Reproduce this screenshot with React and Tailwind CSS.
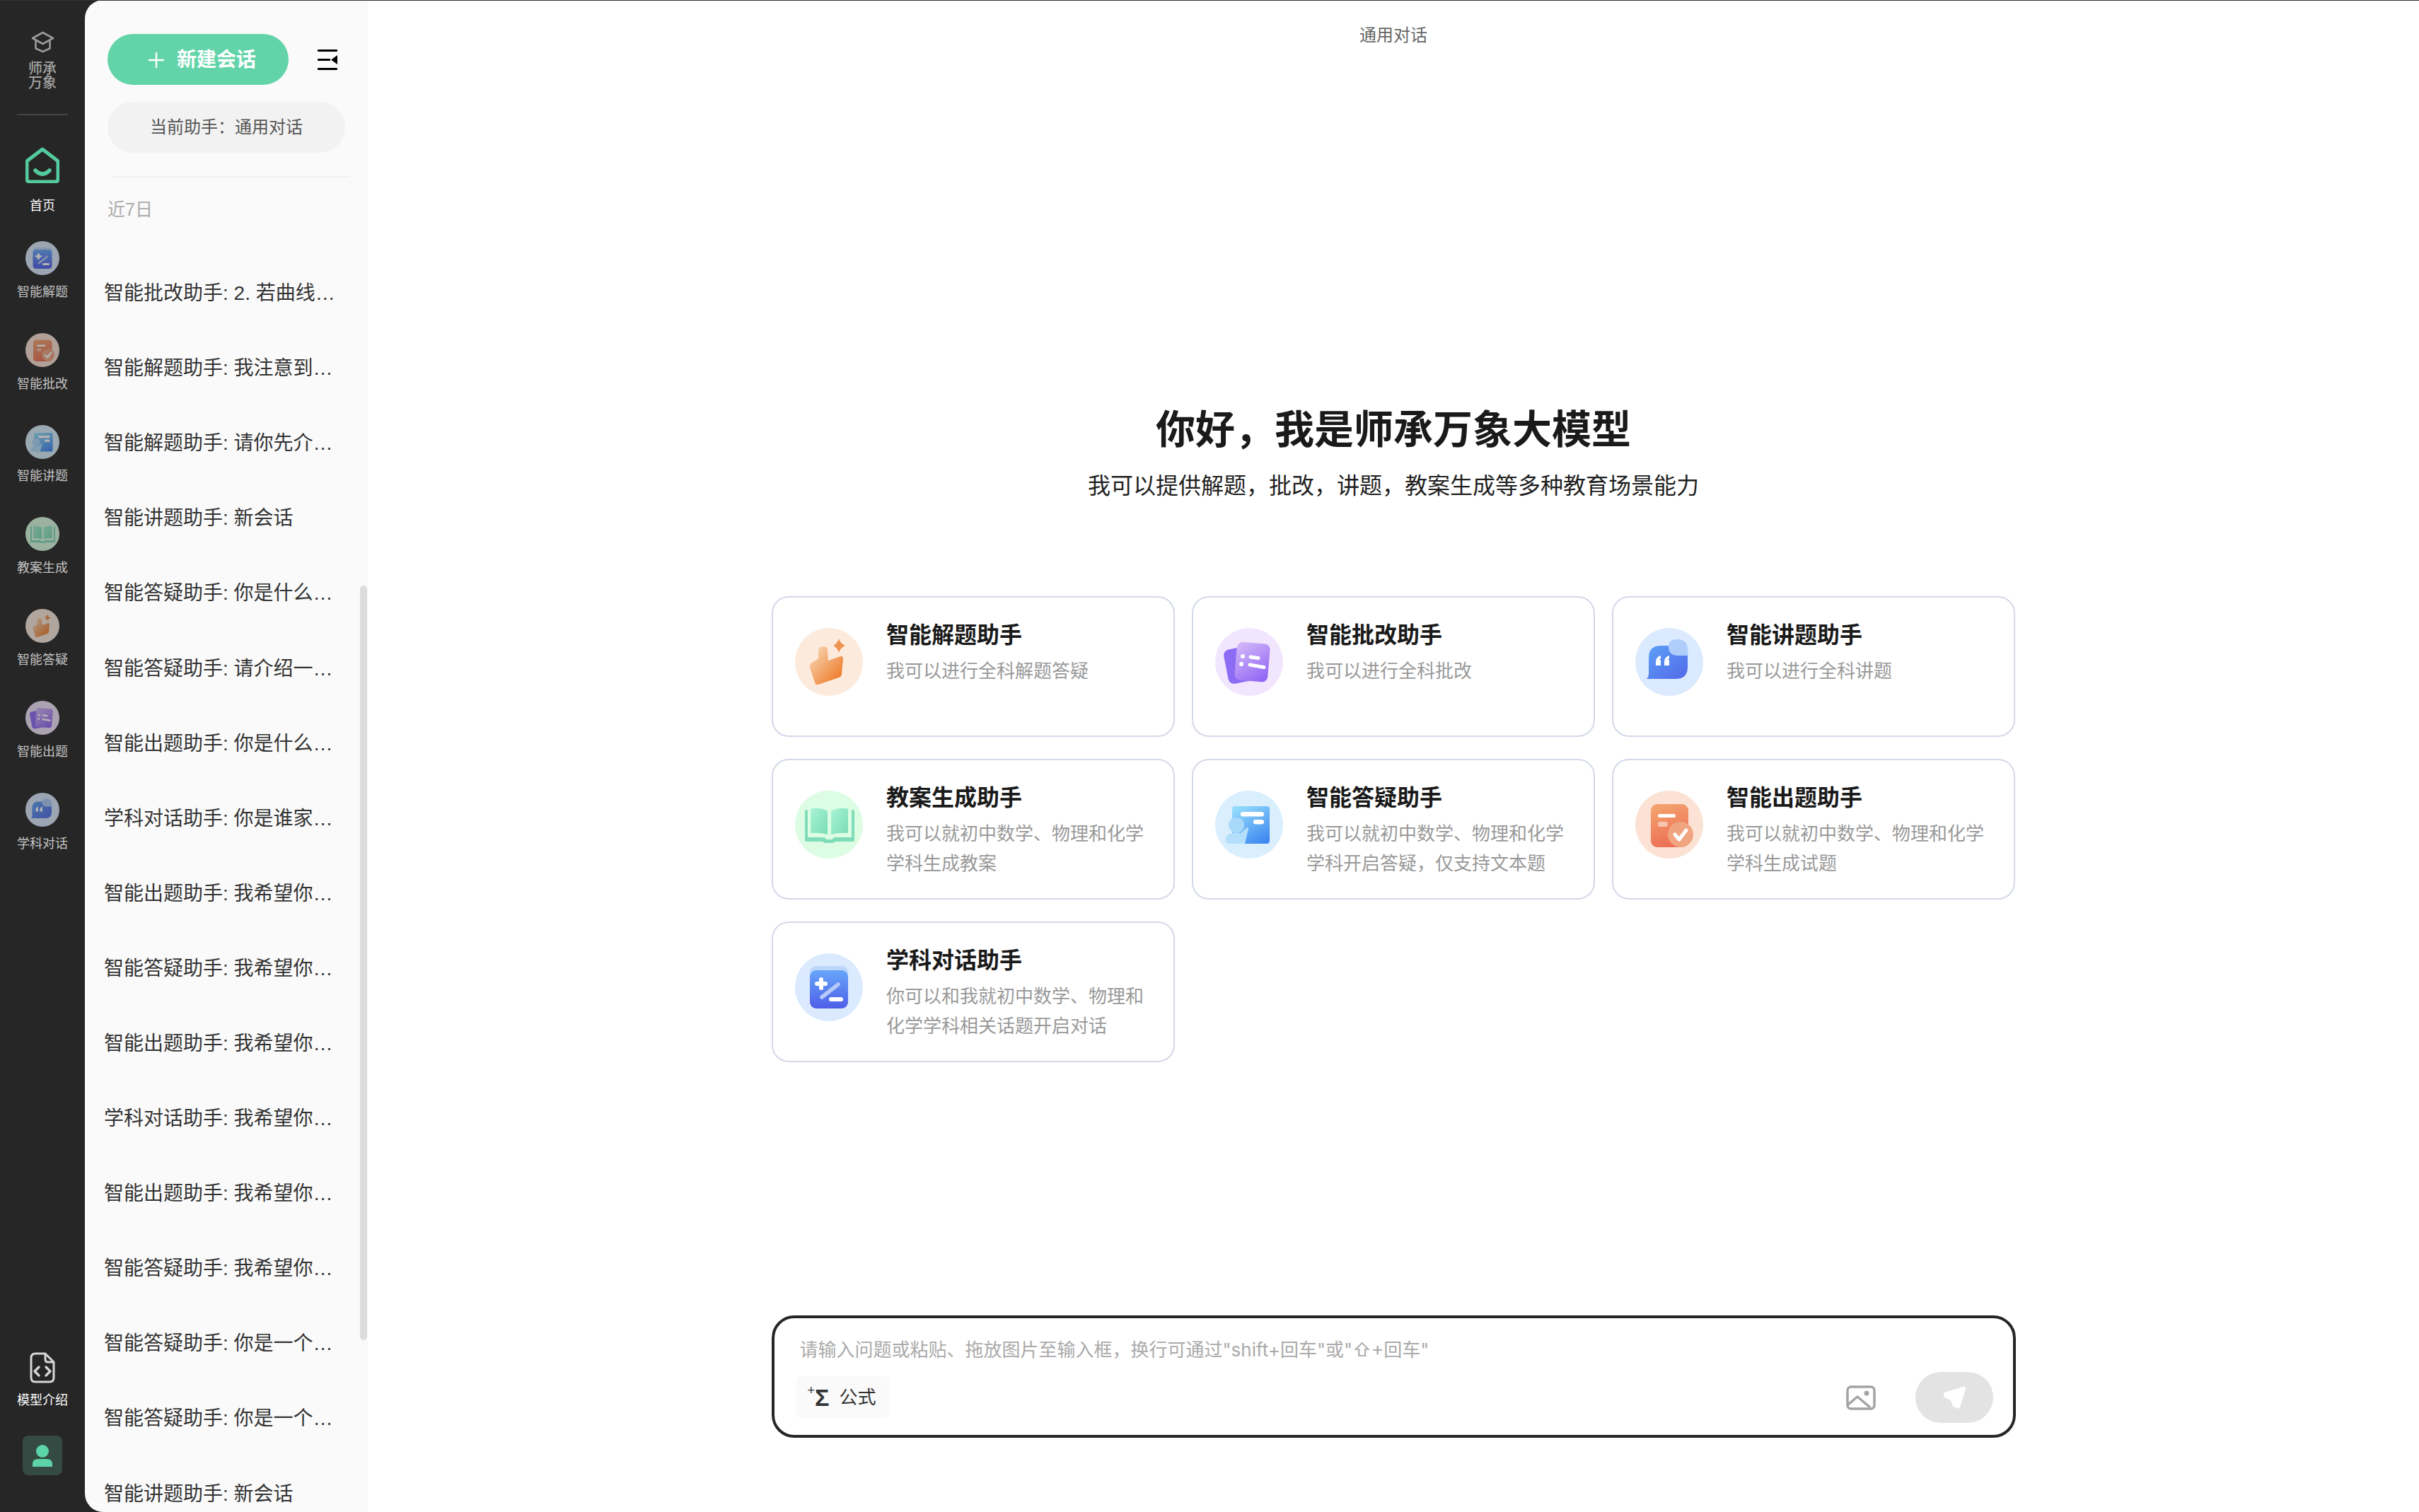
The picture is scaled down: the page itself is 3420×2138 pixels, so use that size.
import { useId } from "react";

const FONT = '"Liberation Sans","Noto Sans CJK SC",sans-serif';

// ikon asisten, semua digambar di kotak 96x96
const ThumbGlyph = ({ id }) => (
  <>
    <defs>
      <linearGradient id={id} x1="0.1" y1="0.1" x2="0.9" y2="0.9">
        <stop offset="0" stopColor="#f7d2ae" />
        <stop offset="1" stopColor="#ee7a28" />
      </linearGradient>
    </defs>
    <path
      d="M33 33q0-7 7-7t6 7l1 13 17-6q4-1 4 4l-2 20q0 5-4 6l-29 10q-4 1-5-3l-7-21q-1-5 3-7l9-6z"
      fill={`url(#${id})`}
    />
    <path d="M62 15q2 7 9 10q-7 3-9 10q-2-7-8-10q6-3 8-10z" fill="#ef9450" />
  </>
);

const CardsGlyph = ({ id }) => (
  <>
    <defs>
      <linearGradient id={id} x1="0.1" y1="0" x2="0.8" y2="1">
        <stop offset="0" stopColor="#d5b9f8" />
        <stop offset="1" stopColor="#9267f5" />
      </linearGradient>
    </defs>
    <rect x="15" y="28" width="38" height="49" rx="8" fill="#8c6bf5" transform="rotate(-11 34 52)" />
    <rect x="29" y="21" width="47" height="54" rx="8" fill={`url(#${id})`} transform="rotate(5 52 48)" />
    <circle cx="39" cy="40" r="3" fill="#fff" />
    <circle cx="37" cy="51" r="3" fill="#fff" />
    <path d="M50 41l11 1.5M49 52l20 3.5" stroke="#fff" strokeWidth="5" strokeLinecap="round" />
  </>
);

const BubbleGlyph = ({ id }) => (
  <>
    <defs>
      <linearGradient id={id} x1="0" y1="0" x2="1" y2="1">
        <stop offset="0" stopColor="#5ea2f8" />
        <stop offset="1" stopColor="#5268e8" />
      </linearGradient>
    </defs>
    <path d="M16 72q3-3 3-8V42q0-17 17-17h21q17 0 17 17v13q0 17-17 17z" fill={`url(#${id})`} />
    <path d="M59 16q15 0 15 14l1 9h6H59q-12-1-12-12t12-11z" fill="#aecdfb" />
    <path
      d="M29 48q0-7 7-9v4q-2 1-2 2h2v8h-7zM41 48q0-7 7-9v4q-2 1-2 2h2v8h-7z"
      fill="#fff"
    />
  </>
);

const BookGlyph = ({ id }) => (
  <>
    <defs>
      <linearGradient id={id} x1="0" y1="0" x2="1" y2="1">
        <stop offset="0" stopColor="#a9f3d6" />
        <stop offset="1" stopColor="#79dcb3" />
      </linearGradient>
    </defs>
    <path
      d="M14 29q0-2 2-2t2 2v37h22q3 0 4 3h9q1-3 4-3h23V29q0-2 2-2t2 2v41q0 2-2 2H57q-2 2-5 2h-8q-3 0-5-2H16q-2 0-2-2z"
      fill="#7fdcb9"
    />
    <path d="M22 27q0-2 3-2 12-1 21 4v33q-10-3-22-2-2 0-2-2z" fill={`url(#${id})`} />
    <path d="M75 27q0-2-3-2-12-1-21 4v33q10-3 22-2 2 0 2-2z" fill={`url(#${id})`} />
  </>
);

const BoardGlyph = ({ id }) => (
  <>
    <defs>
      <linearGradient id={id} x1="0.2" y1="0" x2="0.8" y2="1">
        <stop offset="0" stopColor="#93dbfb" />
        <stop offset="1" stopColor="#3f88f0" />
      </linearGradient>
    </defs>
    <rect x="24" y="22" width="53" height="53" rx="4" fill={`url(#${id})`} />
    <rect x="36" y="30" width="33" height="6.5" rx="3.2" fill="#fff" />
    <rect x="54" y="41" width="15" height="6.5" rx="3.2" fill="#fff" />
    <circle cx="30" cy="49" r="11" fill="#a9d9fa" />
    <path d="M15 70q0-10 10-10h11l9-8q2-1 2 2l-5 21H19q-4 0-4-5z" fill="#b4dffb" />
  </>
);

const DocGlyph = ({ id }) => (
  <>
    <defs>
      <linearGradient id={id} x1="0.2" y1="0" x2="0.5" y2="1">
        <stop offset="0" stopColor="#f4a46e" />
        <stop offset="1" stopColor="#ec6e55" />
      </linearGradient>
    </defs>
    <rect x="22" y="19" width="53" height="61" rx="9" fill={`url(#${id})`} />
    <rect x="32" y="33" width="25" height="5" rx="2.5" fill="#fff" />
    <rect x="32" y="44" width="14" height="7" rx="3.5" fill="#fff" fillOpacity="0.5" />
    <circle cx="64" cy="62" r="18" fill="#f0a580" />
    <path d="M56 62l6 7 10-13" fill="none" stroke="#fff" strokeWidth="5" strokeLinecap="round" strokeLinejoin="round" />
  </>
);

const MathGlyph = ({ id }) => (
  <>
    <defs>
      <linearGradient id={id} x1="0.5" y1="0" x2="0.5" y2="1">
        <stop offset="0" stopColor="#67a6fa" />
        <stop offset="1" stopColor="#4f5ee8" />
      </linearGradient>
    </defs>
    <rect x="21" y="18" width="54" height="40" rx="9" fill="#bcd5fa" />
    <rect x="21" y="24" width="54" height="54" rx="9" fill={`url(#${id})`} />
    <path d="M37 37v12M31 43h12" stroke="#fff" strokeWidth="6" strokeLinecap="round" />
    <path d="M38 62l23-18" stroke="#b7c9f8" strokeWidth="5.5" strokeLinecap="round" />
    <path d="M51 65h14" stroke="#fff" strokeWidth="6" strokeLinecap="round" />
  </>
);

const AssistantIcon = ({ glyph: Glyph, bg, size }) => {
  const id = useId();
  return (
    <svg width={size} height={size} viewBox="0 0 96 96" className="shrink-0">
      <circle cx="48" cy="48" r="48" fill={bg} />
      <Glyph id={id} />
    </svg>
  );
};

const ICONS = {
  thumb: { glyph: ThumbGlyph, bg: "#fcebdd" },
  cards: { glyph: CardsGlyph, bg: "#f2e6fe" },
  bubble: { glyph: BubbleGlyph, bg: "#dbeafe" },
  book: { glyph: BookGlyph, bg: "#dcfde3" },
  board: { glyph: BoardGlyph, bg: "#d9effe" },
  doc: { glyph: DocGlyph, bg: "#fbe2d5" },
  math: { glyph: MathGlyph, bg: "#dbeafe" },
};

const railItems = [
  { label: "智能解题", icon: "math" },
  { label: "智能批改", icon: "doc" },
  { label: "智能讲题", icon: "board" },
  { label: "教案生成", icon: "book" },
  { label: "智能答疑", icon: "thumb" },
  { label: "智能出题", icon: "cards" },
  { label: "学科对话", icon: "bubble" },
];

const historyItems = [
  "智能批改助手: 2. 若曲线…",
  "智能解题助手: 我注意到…",
  "智能解题助手: 请你先介…",
  "智能讲题助手: 新会话",
  "智能答疑助手: 你是什么…",
  "智能答疑助手: 请介绍一…",
  "智能出题助手: 你是什么…",
  "学科对话助手: 你是谁家…",
  "智能出题助手: 我希望你…",
  "智能答疑助手: 我希望你…",
  "智能出题助手: 我希望你…",
  "学科对话助手: 我希望你…",
  "智能出题助手: 我希望你…",
  "智能答疑助手: 我希望你…",
  "智能答疑助手: 你是一个…",
  "智能答疑助手: 你是一个…",
  "智能讲题助手: 新会话",
];

const cards = [
  { title: "智能解题助手", desc: "我可以进行全科解题答疑", icon: "thumb" },
  { title: "智能批改助手", desc: "我可以进行全科批改", icon: "cards" },
  { title: "智能讲题助手", desc: "我可以进行全科讲题", icon: "bubble" },
  { title: "教案生成助手", desc: "我可以就初中数学、物理和化学学科生成教案", icon: "book" },
  { title: "智能答疑助手", desc: "我可以就初中数学、物理和化学学科开启答疑，仅支持文本题", icon: "board" },
  { title: "智能出题助手", desc: "我可以就初中数学、物理和化学学科生成试题", icon: "doc" },
  { title: "学科对话助手", desc: "你可以和我就初中数学、物理和化学学科相关话题开启对话", icon: "math" },
];

const Rail = () => (
  <div className="w-[120px] shrink-0 flex flex-col items-center pt-[44px] pb-[52px]">
    <svg width="33" height="31" viewBox="0 0 33 31" fill="none" stroke="#9a9a9a" strokeWidth="2.6" strokeLinejoin="round">
      <path d="M16.5 2L31 10 16.5 18 2 10z" />
      <path d="M6.5 13.5v11L16.5 29l10-4.5v-11" />
    </svg>
    <div className="mt-[12px] text-[20px] leading-[20px] font-medium text-center text-[#a3a3a3]">
      师承
      <br />
      万象
    </div>
    <div className="mt-[34px] w-[72px] h-[2px] bg-[#444444]" />
    <svg width="48" height="51" viewBox="0 0 48 51" fill="none" className="mt-[45px]" stroke="#54cb9f" strokeLinejoin="round" strokeLinecap="round">
      <path d="M24 3L45 19q1 1 1 2v24q0 4-4 4H6q-4 0-4-4V21q0-1 1-2z" strokeWidth="5" />
      <path d="M14 33q10 10 20 0" strokeWidth="5.5" />
    </svg>
    <div className="mt-[20px] text-[18px] leading-[24px] text-white">首页</div>
    <div className="mt-[38px] flex flex-col gap-[46px]">
      {railItems.map((item) => (
        <div key={item.label} className="flex flex-col items-center gap-[12px]">
          <div className="opacity-65">
            <AssistantIcon {...ICONS[item.icon]} size={48} />
          </div>
          <div className="text-[18px] leading-[24px] text-[#c4c4c4]">{item.label}</div>
        </div>
      ))}
    </div>
    <div className="mt-auto flex flex-col items-center">
      <svg width="36" height="44" viewBox="0 0 36 44" fill="none" stroke="#d6d6d6" strokeWidth="3" strokeLinecap="round" strokeLinejoin="round">
        <path d="M22 2H8q-6 0-6 6v28q0 6 6 6h20q6 0 6-6V14z" />
        <path d="M22 3v7q0 4 4 4h7" />
        <path d="M13 21l-6 6 6 6M23 21l6 6-6 6" strokeWidth="3.4" />
      </svg>
      <div className="mt-[12px] text-[18px] leading-[24px] text-white">模型介绍</div>
      <div className="mt-[38px] w-[56px] h-[56px] rounded-lg bg-[#344a42] flex items-center justify-center">
        <svg width="28" height="31" viewBox="0 0 28 31" fill="#5dd3a8">
          <circle cx="14" cy="9" r="9" />
          <path d="M0 27q0-7 8-7h12q8 0 8 7v4H0z" />
        </svg>
      </div>
    </div>
  </div>
);

const Sidebar = () => (
  <div className="relative w-[400px] shrink-0 h-full bg-[#fafafa] rounded-l-[26px] overflow-hidden">
    <div className="pl-[32px] pt-[48px]">
      <div className="flex items-center">
        <button className="w-[256px] h-[72px] pl-[12px] pt-[2px] rounded-full bg-[#63d4a9] text-white text-[28px] font-bold flex items-center justify-center gap-[18px]">
          <svg width="22" height="22" viewBox="0 0 22 22" stroke="#fff" strokeWidth="2.4">
            <path d="M11 0v22M0 11h22" />
          </svg>
          新建会话
        </button>
        <svg width="28" height="29" viewBox="0 0 28 29" className="ml-[41px]" fill="#000">
          <rect width="28" height="3" rx="1" />
          <rect y="13" width="18" height="3" rx="1" />
          <rect y="26" width="28" height="3" rx="1" />
          <path d="M28 8v13l-9-6.5z" />
        </svg>
      </div>
      <div className="mt-[24px] w-[336px] h-[72px] rounded-full bg-[#f2f2f2] text-[24px] text-[#555555] flex items-center justify-center">
        当前助手：通用对话
      </div>
      <div className="mt-[33px] ml-[8px] w-[335px] h-[2px] bg-[#f0f0f0]" />
      <div className="mt-[29px] text-[25px] leading-[32px] text-[#aaaaaa]">近7日</div>
    </div>
    <div className="mt-[50px] pl-[27px]">
      {historyItems.map((text, i) => (
        <div key={i} className="h-[106.1px] flex items-center text-[28px] text-[#333333] whitespace-nowrap">
          {text}
        </div>
      ))}
    </div>
    <div className="absolute right-[1px] top-[828px] w-[10px] h-[1067px] rounded-full bg-[#dddddd]" />
  </div>
);

const AssistantCard = ({ card }) => (
  <div className="h-[199px] bg-white border-2 border-[#d4d9e8] rounded-[24px] flex pl-[31px] pr-[31px]">
    <div className="pt-[43px]">
      <AssistantIcon {...ICONS[card.icon]} size={96} />
    </div>
    <div className="ml-[33px] pt-[32px] flex-1">
      <div className="text-[32px] leading-[42px] font-bold text-[#1a1a1a]">{card.title}</div>
      <div className="mt-[9px] text-[26px] leading-[42px] text-[#999999]">{card.desc}</div>
    </div>
  </div>
);

const Composer = () => (
  <div className="w-[1759px] h-[173px] border-4 border-[#262626] rounded-[32px] bg-white pl-[31px] pr-[28px] pt-[27px] relative">
    <div className="pl-[5px] text-[26px] leading-[36px] text-[#aaaaaa] whitespace-nowrap font-[Inter,'Noto_Sans_CJK_SC',sans-serif]">
      请输入问题或粘贴、拖放图片至输入框，换行可通过"shift+回车"或"⇧+回车"
    </div>
    <div className="mt-[19px] flex items-start justify-between">
      <div className="w-[131px] h-[60px] rounded-lg bg-[#fafafa] flex items-center pl-[16px] text-[#333333]">
        <span className="text-[18px] leading-[18px] self-start mt-[11px]">+</span>
        <span className="text-[34px] leading-[34px] font-bold">Σ</span>
        <span className="ml-[14px] text-[26px] leading-[30px]">公式</span>
      </div>
      <div className="flex items-center gap-[56px] -mt-[6px]">
        <svg width="42" height="35" viewBox="0 0 42 35" fill="none" stroke="#a3a3a3" strokeWidth="3.5" strokeLinejoin="round">
          <rect x="2" y="2" width="38" height="31" rx="5" />
          <path d="M3 27l13-11 18 15" />
          <circle cx="29" cy="11" r="3.5" fill="#a3a3a3" stroke="none" />
        </svg>
        <div className="w-[110px] h-[72px] rounded-full bg-[#e3e3e3] flex items-center justify-center">
          <svg width="34" height="33" viewBox="0 0 34 33" fill="#fff">
            <path d="M3 9L29 1q4-1 4 3l-8 26q-2 3-5 1l-4-2q-2-1-2-4 0-3-3-5-2-2-6-3-5-3-2-8z" />
          </svg>
        </div>
      </div>
    </div>
  </div>
);

export default function App() {
  return (
    <div
      className="relative w-[3420px] h-[2138px] flex bg-[#262626] overflow-hidden"
      style={{ fontFamily: FONT }}
    >
      <div className="absolute inset-x-0 top-0 h-px bg-[#333333] z-10" />
      <Rail />
      <Sidebar />
      <div className="flex-1 h-full bg-white flex flex-col items-center">
        <div className="mt-[36px] text-[24px] leading-[28px] text-[#666666]">通用对话</div>
        <div className="mt-[508px] text-[56px] leading-[72px] font-bold text-[#1a1a1a]">
          你好，我是师承万象大模型
        </div>
        <div className="mt-[21px] text-[32px] leading-[44px] text-[#1f1f1f]">
          我可以提供解题，批改，讲题，教案生成等多种教育场景能力
        </div>
        <div className="mt-[134px] w-[1758px] grid grid-cols-3 gap-x-[24px] gap-y-[31px]">
          {cards.map((card) => (
            <AssistantCard key={card.title} card={card} />
          ))}
        </div>
        <div className="mt-auto mb-[105px]">
          <Composer />
        </div>
      </div>
    </div>
  );
}
